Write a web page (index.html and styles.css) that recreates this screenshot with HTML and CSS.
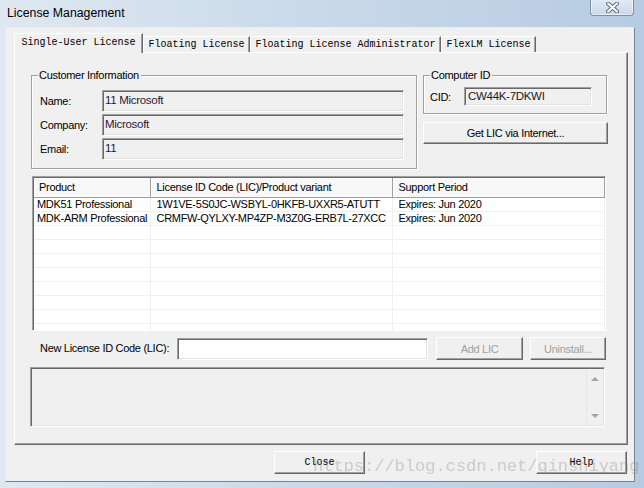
FILE: index.html
```html
<!DOCTYPE html>
<html lang="en">
<head>
  <meta charset="UTF-8">
  <meta name="viewport" content="width=device-width, initial-scale=1.0">
  <title>License Management</title>
  <link rel="stylesheet" href="styles.css">
</head>
<body>
  <div class="window">
    <div class="titlebar">
      <span class="title">License Management</span>
      <div class="close-x">
        <svg width="13" height="11" viewBox="0 0 13 11">
          <path d="M2 1.5 L11 9.5 M11 1.5 L2 9.5" stroke="#5e6b7c" stroke-width="4" stroke-linecap="round" fill="none"/>
          <path d="M2 1.5 L11 9.5 M11 1.5 L2 9.5" stroke="#ffffff" stroke-width="2" stroke-linecap="round" fill="none"/>
        </svg>
      </div>
    </div>

    <div class="client">
      <div class="tabs">
        <div class="tab active tab-1">Single-User License</div>
        <div class="tab tab-2">Floating License</div>
        <div class="tab tab-3">Floating License Administrator</div>
        <div class="tab tab-4">FlexLM License</div>
      </div>

      <div class="panel">
        <div class="top-row">
          <div class="group customer">
            <span class="group-title">Customer Information</span>
            <div class="field-row"><span class="label">Name:</span><div class="field">11 Microsoft</div></div>
            <div class="field-row"><span class="label">Company:</span><div class="field">Microsoft</div></div>
            <div class="field-row"><span class="label">Email:</span><div class="field">11</div></div>
          </div>

          <div class="right-col">
            <div class="group cid">
              <span class="group-title">Computer ID</span>
              <div class="field-row"><span class="label cid-label">CID:</span><div class="field cid-field">CW44K-7DKWI</div></div>
            </div>
            <button class="btn btn-wide">Get LIC via Internet...</button>
          </div>
        </div>

        <div class="list">
          <table class="lic-table">
            <colgroup>
              <col class="c1"><col class="c2"><col class="c3">
            </colgroup>
            <thead>
              <tr><th>Product</th><th>License ID Code (LIC)/Product variant</th><th>Support Period</th></tr>
            </thead>
            <tbody>
              <tr><td>MDK51 Professional</td><td>1W1VE-5S0JC-WSBYL-0HKFB-UXXR5-ATUTT</td><td>Expires: Jun 2020</td></tr>
              <tr><td>MDK-ARM Professional</td><td>CRMFW-QYLXY-MP4ZP-M3Z0G-ERB7L-27XCC</td><td>Expires: Jun 2020</td></tr>
              <tr><td></td><td></td><td></td></tr>
              <tr><td></td><td></td><td></td></tr>
              <tr><td></td><td></td><td></td></tr>
              <tr><td></td><td></td><td></td></tr>
              <tr><td></td><td></td><td></td></tr>
              <tr><td></td><td></td><td></td></tr>
              <tr><td></td><td></td><td></td></tr>
              <tr><td></td><td></td><td></td></tr>
            </tbody>
          </table>
        </div>

        <div class="add-row">
          <span class="add-label">New License ID Code (LIC):</span>
          <div class="lic-input"></div>
          <button class="btn btn-add" disabled>Add LIC</button>
          <button class="btn btn-uninstall" disabled>Uninstall...</button>
        </div>

        <div class="msgbox">
          <div class="msg-text"></div>
          <div class="vscroll">
            <span class="arrow up"></span>
            <span class="arrow down"></span>
          </div>
        </div>
      </div>

      <div class="footer">
        <button class="btn btn-dlg btn-close">Close</button>
        <button class="btn btn-dlg btn-help">Help</button>
      </div>

      <div class="watermark">https://blog.csdn.net/qinshiyang</div>
    </div>
  </div>
</body>
</html>
```

FILE: styles.css
```css
/* base */
body {
  margin: 0;
  font-family: "Liberation Sans", Arial, sans-serif;
  font-size: 11px;
  color: #000;
  background: #f0f0f0;
}

.window {
  width: 644px;
  height: 488px;
  background: linear-gradient(to right, #dfe8f1 0%, #cbdaea 45%, #b6cbe2 100%);
  display: flex;
  flex-direction: column;
  overflow: hidden;
}

/* title bar */
.titlebar {
  height: 27px;
  display: flex;
  justify-content: space-between;
  align-items: flex-start;
  padding: 0 10px 0 7px;
  flex-shrink: 0;
}

.title {
  font-size: 12.3px;
  line-height: 26px;
  color: #000;
}

.close-x {
  width: 44px;
  height: 17px;
  margin-top: -1px;
  box-sizing: border-box;
  border: 1px solid #7d8fa5;
  border-top: none;
  border-radius: 0 0 4px 4px;
  background: linear-gradient(#e4ecf5, #c8d7e8);
  box-shadow: inset 0 0 0 1px rgba(255, 255, 255, 0.6);
  display: flex;
  align-items: center;
  justify-content: center;
}

/* client area */
.client {
  position: relative;
  margin: 0 9px 0 5px;
  height: 455px;
  box-sizing: border-box;
  background: #f0f0f0;
  border: 1px solid;
  border-color: #e8eef5 #74859a #74859a #e8eef5;
}

/* tabs */
.tabs {
  display: flex;
  align-items: flex-end;
  height: 19px;
  margin: 5px 0 0 8px;
  font-family: "Liberation Mono", "Courier New", monospace;
  font-size: 10px;
}

.tab {
  height: 16px;
  box-sizing: border-box;
  border-top: 1px solid #fff;
  border-left: 1px solid #fff;
  border-right: 1px solid #696969;
  box-shadow: inset -1px 0 0 #a0a0a0;
  background: #f0f0f0;
  display: flex;
  align-items: center;
  justify-content: center;
  white-space: nowrap;
}

.tab.active {
  height: 20px;
  margin-bottom: -1px;
  padding-bottom: 3px;
  position: relative;
  z-index: 1;
}

.tab-1 { width: 129px; }
.tab-2 { width: 107px; }
.tab-3 { width: 191px; }
.tab-4 { width: 95px; }

/* tab page */
.panel {
  margin-left: 8px;
  width: 614px;
  height: 393px;
  box-sizing: border-box;
  border: 1px solid;
  border-color: #fff #696969 #696969 #fff;
  box-shadow: inset -1px -1px 0 #a0a0a0;
  letter-spacing: -0.3px;
}

.top-row {
  display: flex;
  gap: 6px;
  padding: 22px 0 0 16px;
}

.group {
  position: relative;
  box-sizing: border-box;
  border: 1px solid #a0a0a0;
  box-shadow: 1px 1px 0 #fff, inset 1px 1px 0 #fff;
}

.group-title {
  position: absolute;
  top: -7px;
  left: 6px;
  padding: 0 2px 0 1px;
  background: #f0f0f0;
  line-height: 13px;
}

.customer {
  width: 386px;
  height: 94px;
  padding: 14px 0 0 8px;
  display: flex;
  flex-direction: column;
  gap: 2px;
}

.field-row {
  display: flex;
  align-items: center;
}

.label {
  width: 62px;
  flex-shrink: 0;
}

.field {
  width: 302px;
  height: 22px;
  box-sizing: border-box;
  border: 1px solid;
  border-color: #a0a0a0 #fff #fff #a0a0a0;
  box-shadow: inset 1px 1px 0 #696969, inset -1px -1px 0 #e3e3e3;
  padding: 3px 0 0 2px;
  color: #2a1838;
  font-size: 11.5px;
}

.right-col {
  width: 185px;
  display: flex;
  flex-direction: column;
  gap: 8px;
}

.cid {
  width: 184px;
  height: 39px;
  padding: 11px 0 0 6px;
}

.cid-label { width: 34px; }

.cid-field {
  width: 128px;
  height: 19px;
  padding: 2px 0 0 3px;
  color: #1a1a1a;
}

/* buttons */
.btn {
  font-family: inherit;
  font-size: 11px;
  letter-spacing: -0.3px;
  color: #000;
  background: #f0f0f0;
  border: 1px solid;
  border-color: #fff #696969 #696969 #fff;
  box-shadow: inset -1px -1px 0 #a0a0a0;
  padding: 0;
  margin: 0;
  box-sizing: border-box;
}

.btn[disabled] {
  color: #a0a0a0;
}

.btn-wide {
  width: 185px;
  height: 22px;
}

/* license list */
.list {
  margin: 7px 0 0 17px;
  width: 574px;
  height: 155px;
  box-sizing: border-box;
  border: 1px solid;
  border-color: #a0a0a0 #fff #fff #a0a0a0;
  box-shadow: inset 1px 1px 0 #696969, inset -1px -1px 0 #e3e3e3;
  padding: 1px;
  overflow: hidden;
}

.lic-table {
  width: 570px;
  table-layout: fixed;
  border-collapse: collapse;
  background: #fff;
}

.c1 { width: 116px; }
.c2 { width: 242px; }
.c3 { width: 212px; }

.lic-table th {
  height: 18px;
  padding: 0 0 1px 6px;
  text-align: left;
  font-weight: normal;
  background: #f8f8f8;
  border-right: 1px solid #a0a0a0;
  border-bottom: 1px solid #a0a0a0;
  box-shadow: inset 1px 1px 0 #fff;
  white-space: nowrap;
}

.lic-table th:first-child { padding-left: 5px; }

.lic-table td {
  height: 13px;
  padding: 0 0 0 6px;
  line-height: 13px;
  border-right: 1px solid #f0f0f0;
  border-bottom: 1px solid #f0f0f0;
  white-space: nowrap;
  overflow: hidden;
}

.lic-table td:first-child { padding-left: 3px; }

/* add licence row */
.add-row {
  display: flex;
  align-items: center;
  margin: 6px 0 0 25px;
  height: 23px;
}

.add-label {
  width: 137px;
  flex-shrink: 0;
  padding-bottom: 1px;
}

.lic-input {
  width: 251px;
  height: 22px;
  box-sizing: border-box;
  background: #fff;
  border: 1px solid;
  border-color: #a0a0a0 #fff #fff #a0a0a0;
  box-shadow: inset 1px 1px 0 #696969, inset -1px -1px 0 #e3e3e3;
}

.btn-add {
  width: 87px;
  height: 23px;
  margin-left: 8px;
}

.btn-uninstall {
  width: 76px;
  height: 23px;
  margin-left: 7px;
}

/* message box */
.msgbox {
  display: flex;
  margin: 7px 0 0 15px;
  width: 575px;
  height: 60px;
  box-sizing: border-box;
  border: 1px solid;
  border-color: #a0a0a0 #fff #fff #a0a0a0;
  box-shadow: inset 1px 1px 0 #696969, inset -1px -1px 0 #e3e3e3;
  padding: 2px 1px 1px 2px;
}

.msg-text { flex: 1; }

.vscroll {
  width: 16px;
  border-left: 1px solid #e6e6e6;
  background: #f0f0f0;
  display: flex;
  flex-direction: column;
  justify-content: space-between;
  align-items: center;
  padding: 7px 0 7px;
}

.arrow {
  width: 0;
  height: 0;
  border-left: 4px solid transparent;
  border-right: 4px solid transparent;
}

.arrow.up { border-bottom: 4px solid #a4a4a4; }
.arrow.down { border-top: 4px solid #a4a4a4; }

/* dialog buttons */
.footer {
  display: flex;
  margin-top: 6px;
}

.btn-dlg {
  width: 91px;
  height: 23px;
  font-family: "Liberation Mono", "Courier New", monospace;
  font-size: 10px;
  letter-spacing: 0;
}

.btn-close { margin-left: 268px; }
.btn-help { margin-left: 171px; }

/* watermark over the buttons */
.watermark {
  position: absolute;
  left: 307px;
  top: 429px;
  font-family: "Liberation Mono", "Courier New", monospace;
  font-size: 17px;
  line-height: 20px;
  color: rgba(110, 110, 110, 0.3);
  white-space: nowrap;
  pointer-events: none;
}
```
